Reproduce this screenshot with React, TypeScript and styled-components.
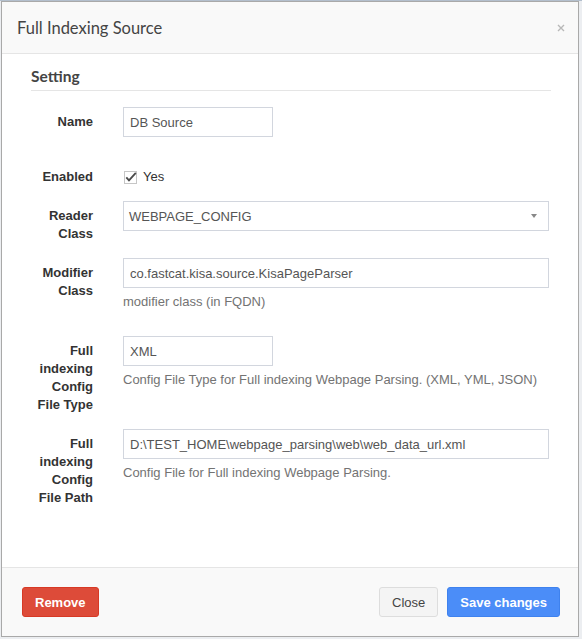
import styled, { createGlobalStyle } from "styled-components";

const GlobalStyle = createGlobalStyle`
  html, body {
    margin: 0;
    padding: 0;
    background: #eceef1;
  }
  body {
    font-family: "Liberation Sans", Arial, sans-serif;
    font-size: 13px;
    color: #333;
  }
  * { box-sizing: border-box; }
`;

const Page = styled.div`
  border-top: 1px solid #b3bfcd;
  padding-left: 1px;
  height: 639px;
  overflow: hidden;
`;

const Modal = styled.div`
  width: 578px;
  height: 636px;
  border: 1px solid #a9a9a9;
  background: #fff;
  display: flex;
  flex-direction: column;
`;

const Header = styled.div`
  height: 52px;
  flex-shrink: 0;
  display: flex;
  align-items: center;
  justify-content: space-between;
  padding: 0 13px 0 15px;
  background: #f9f9f9;
  border-bottom: 1px solid #e5e5e5;
`;

const Title = styled.h4`
  margin: 0;
  font-family: Lato, "Open Sans", sans-serif;
  font-weight: 400;
  font-size: 16.5px;
  color: #444;
`;

const CloseX = styled.button`
  border: 0;
  padding: 0;
  background: none;
  width: 8px;
  height: 8px;
  display: flex;
  cursor: pointer;
`;

const Body = styled.div`
  flex: 1;
  padding: 12px 27px 0 29px;
`;

const Legend = styled.div`
  font-family: Lato, "Open Sans", sans-serif;
  font-weight: 700;
  font-size: 15.5px;
  line-height: 20px;
  color: #444;
  padding-bottom: 4px;
  border-bottom: 1px solid #e5e5e5;
  margin-bottom: 16px;
`;

const Row = styled.div<{ $gap?: number }>`
  display: grid;
  grid-template-columns: 62px 1fr;
  column-gap: 30px;
  padding-right: 2px;
  margin-bottom: ${({ $gap }) => $gap ?? 15}px;
`;

const Label = styled.label`
  text-align: right;
  font-weight: 700;
  font-size: 13px;
  line-height: 18px;
  padding-top: 6px;
  color: #333;
`;

const Field = styled.div`
  display: flex;
  flex-direction: column;
  align-items: flex-start;
`;

const TextInput = styled.input<{ $short?: boolean }>`
  width: ${({ $short }) => ($short ? "150px" : "100%")};
  height: 30px;
  border: 1px solid #d2d6de;
  border-radius: 0;
  padding: 0 6px;
  font-family: "Liberation Sans", Arial, sans-serif;
  font-size: 13px;
  color: #555;
  background: #fff;
  outline: none;
`;

const SelectBox = styled.div`
  width: 100%;
  height: 30px;
  border: 1px solid #d2d6de;
  padding: 0 11px 0 5px;
  display: flex;
  align-items: center;
  justify-content: space-between;
  color: #555;
  font-size: 13px;
`;

const CheckRow = styled.label`
  display: flex;
  align-items: center;
  gap: 6px;
  padding: 6px 0 0 1px;
  line-height: 18px;
  font-size: 13px;
  color: #333;
`;

const Help = styled.div`
  margin: 5px 0 10px;
  line-height: 18px;
  font-size: 13px;
  color: #737373;
`;

const Footer = styled.div`
  height: 69px;
  flex-shrink: 0;
  display: flex;
  align-items: center;
  justify-content: space-between;
  padding: 0 18px 0 20px;
  background: #f9f9f9;
  border-top: 1px solid #e5e5e5;
`;

const ButtonGroup = styled.div`
  display: flex;
  gap: 9px;
`;

const palette = {
  danger: { bg: "#dd4b39", border: "#d73925", color: "#fff", weight: 700 },
  plain: { bg: "#f4f4f4", border: "#dddddd", color: "#444", weight: 400 },
  primary: { bg: "#4b8df8", border: "#3f82ee", color: "#fff", weight: 700 },
};

const Button = styled.button<{ $variant: keyof typeof palette }>`
  height: 30px;
  padding: 0 12px;
  border-radius: 3px;
  border: 1px solid ${({ $variant }) => palette[$variant].border};
  background: ${({ $variant }) => palette[$variant].bg};
  color: ${({ $variant }) => palette[$variant].color};
  font-family: "Liberation Sans", Arial, sans-serif;
  font-size: 13px;
  font-weight: ${({ $variant }) => palette[$variant].weight};
  cursor: pointer;
`;

const CheckIcon = () => (
  <svg width="13" height="13" viewBox="0 0 13 13">
    <rect x="0.5" y="0.5" width="12" height="12" fill="#fff" stroke="#c6c6c6" />
    <path d="M2.3 6.3 L5 9.4 L11.8 1.8" fill="none" stroke="#4a4a4a" strokeWidth="1.8" />
  </svg>
);

export default function App() {
  return (
    <Page>
      <GlobalStyle />
      <Modal>
        <Header>
          <Title>Full Indexing Source</Title>
          <CloseX aria-label="close">
            <svg width="8" height="8" viewBox="0 0 8 8">
              <path d="M1 1 L7 7 M7 1 L1 7" stroke="#b8b8b8" strokeWidth="1.4" />
            </svg>
          </CloseX>
        </Header>

        <Body>
          <Legend>Setting</Legend>

          <Row $gap={25}>
            <Label>Name</Label>
            <Field>
              <TextInput $short readOnly value="DB Source" />
            </Field>
          </Row>

          <Row>
            <Label>Enabled</Label>
            <Field>
              <CheckRow>
                <CheckIcon />
                Yes
              </CheckRow>
            </Field>
          </Row>

          <Row>
            <Label>Reader Class</Label>
            <Field>
              <SelectBox>
                <span>WEBPAGE_CONFIG</span>
                <svg width="6" height="4" viewBox="0 0 6 4">
                  <path d="M0 0 L6 0 L3 4 Z" fill="#888" />
                </svg>
              </SelectBox>
            </Field>
          </Row>

          <Row>
            <Label>Modifier Class</Label>
            <Field>
              <TextInput readOnly value="co.fastcat.kisa.source.KisaPageParser" />
              <Help>modifier class (in FQDN)</Help>
            </Field>
          </Row>

          <Row>
            <Label>Full indexing Config File Type</Label>
            <Field>
              <TextInput $short readOnly value="XML" />
              <Help>Config File Type for Full indexing Webpage Parsing. (XML, YML, JSON)</Help>
            </Field>
          </Row>

          <Row>
            <Label>Full indexing Config File Path</Label>
            <Field>
              <TextInput readOnly value="D:\TEST_HOME\webpage_parsing\web\web_data_url.xml" />
              <Help>Config File for Full indexing Webpage Parsing.</Help>
            </Field>
          </Row>
        </Body>

        <Footer>
          <Button $variant="danger">Remove</Button>
          <ButtonGroup>
            <Button $variant="plain">Close</Button>
            <Button $variant="primary">Save changes</Button>
          </ButtonGroup>
        </Footer>
      </Modal>
    </Page>
  );
}
